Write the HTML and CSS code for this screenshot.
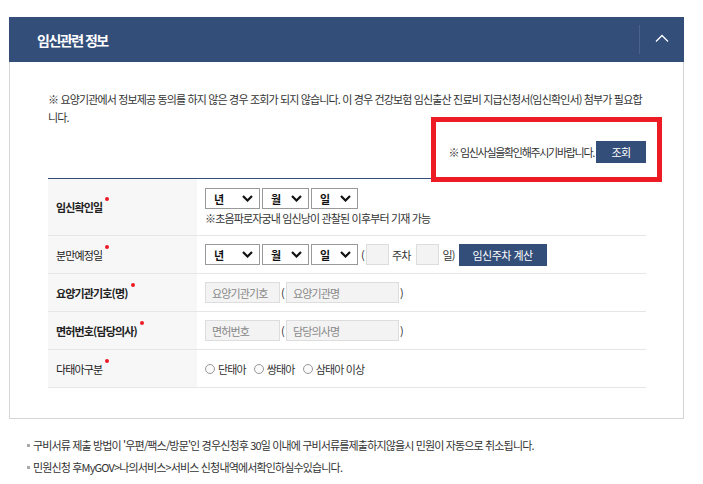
FILE: index.html
```html
<!DOCTYPE html>
<html lang="ko">
<head>
    <meta charset="UTF-8">
    <meta name="viewport" content="width=device-width, initial-scale=1.0">
    <title>임신관련 정보</title>
    <link rel="stylesheet" href="styles.css">
</head>
<body>
    <div class="wrap">
        <div class="panel">
            <div class="panel-head">
                <h2>임신관련 정보</h2>
                <button type="button" class="toggle" aria-label="접기">
                    <svg width="14" height="8" viewBox="0 0 14 8"><polyline points="1,7.5 7,1.5 13,7.5" fill="none" stroke="#fff" stroke-width="1.3"/></svg>
                </button>
            </div>

            <div class="panel-body">
                <p class="notice">※ 요양기관에서 정보제공 동의를 하지 않은 경우 조회가 되지 않습니다. 이 경우 건강보험 임신출산 진료비 지급신청서(임신확인서) 첨부가 필요합니다.</p>

                <div class="check-row">
                    <span class="check-msg">※ 임신사실을확인해주시기바랍니다.</span>
                    <button type="button" class="btn btn-sm">조회</button>
                    <div class="mark"></div>
                </div>

                <table class="form-table">
                    <tr class="tall">
                        <th><span class="req">임신확인일</span></th>
                        <td>
                            <div class="line">
                                <div class="sel sel-y">년<svg width="11" height="7" viewBox="0 0 11 7"><polyline points="1,1 5.5,5.5 10,1" fill="none" stroke="#111" stroke-width="2.2"/></svg></div>
                                <div class="sel">월<svg width="11" height="7" viewBox="0 0 11 7"><polyline points="1,1 5.5,5.5 10,1" fill="none" stroke="#111" stroke-width="2.2"/></svg></div>
                                <div class="sel">일<svg width="11" height="7" viewBox="0 0 11 7"><polyline points="1,1 5.5,5.5 10,1" fill="none" stroke="#111" stroke-width="2.2"/></svg></div>
                            </div>
                            <p class="hint">※초음파로자궁내 임신낭이 관찰된 이후부터 기재 가능</p>
                        </td>
                    </tr>
                    <tr>
                        <th><span class="req light">분만예정일</span></th>
                        <td>
                            <div class="line">
                                <div class="sel sel-y">년<svg width="11" height="7" viewBox="0 0 11 7"><polyline points="1,1 5.5,5.5 10,1" fill="none" stroke="#111" stroke-width="2.2"/></svg></div>
                                <div class="sel">월<svg width="11" height="7" viewBox="0 0 11 7"><polyline points="1,1 5.5,5.5 10,1" fill="none" stroke="#111" stroke-width="2.2"/></svg></div>
                                <div class="sel">일<svg width="11" height="7" viewBox="0 0 11 7"><polyline points="1,1 5.5,5.5 10,1" fill="none" stroke="#111" stroke-width="2.2"/></svg></div>
                                <span class="paren">(</span>
                                <input type="text" class="inp inp-xs">
                                <span class="unit">주차</span>
                                <input type="text" class="inp inp-xs">
                                <span class="unit tight">일)</span>
                                <button type="button" class="btn btn-calc">임신주차 계산</button>
                            </div>
                        </td>
                    </tr>
                    <tr>
                        <th><span class="req">요양기관기호(명)</span></th>
                        <td>
                            <div class="line">
                                <input type="text" class="inp inp-md" placeholder="요양기관기호">
                                <span class="paren">(</span>
                                <input type="text" class="inp inp-lg" placeholder="요양기관명">
                                <span class="paren">)</span>
                            </div>
                        </td>
                    </tr>
                    <tr>
                        <th><span class="req">면허번호(담당의사)</span></th>
                        <td>
                            <div class="line">
                                <input type="text" class="inp inp-md" placeholder="면허번호">
                                <span class="paren">(</span>
                                <input type="text" class="inp inp-lg" placeholder="담당의사명">
                                <span class="paren">)</span>
                            </div>
                        </td>
                    </tr>
                    <tr>
                        <th><span class="req light">다태아구분</span></th>
                        <td>
                            <div class="line radios">
                                <label><span class="radio"></span>단태아</label>
                                <label><span class="radio"></span>쌍태아</label>
                                <label><span class="radio"></span>삼태아 이상</label>
                            </div>
                        </td>
                    </tr>
                </table>
            </div>
        </div>

        <ul class="notes">
            <li>구비서류 제출 방법이 '우편/팩스/방문'인 경우신청후 30일 이내에 구비서류를제출하지않을시 민원이 자동으로 취소됩니다.</li>
            <li>민원신청 후MyGOV&gt;나의서비스&gt;서비스 신청내역에서확인하실수있습니다.</li>
        </ul>
    </div>
</body>
</html>
```

FILE: styles.css
```css
body {
    margin: 0;
    padding: 0;
    background-color: #fff;
    color: #333;
    font-family: "Noto Sans CJK KR", "Noto Sans", sans-serif;
    font-size: 11px;
    letter-spacing: -0.85px;
}

.wrap {
    padding: 17px 19px 0 9px;
}

/* panel header */
.panel-head {
    display: flex;
    align-items: center;
    justify-content: space-between;
    height: 45px;
    background-color: #344e7a;
}

.panel-head h2 {
    margin: 0 0 0 28px;
    font-size: 14px;
    font-weight: bold;
    color: #fff;
    letter-spacing: -1.5px;
}

.toggle {
    display: flex;
    align-items: center;
    justify-content: center;
    width: 45px;
    height: 29px;
    padding: 0 0 3px 0;
    border: none;
    border-left: 1px solid #4a6189;
    background: none;
    cursor: pointer;
}

/* panel body */
.panel-body {
    padding: 28px 37px 30px 38px;
    border: 1px solid #d5d5d5;
    border-top: none;
}

.notice {
    margin: 0;
    line-height: 18px;
    color: #333;
}

.check-row {
    position: relative;
    display: flex;
    align-items: center;
    justify-content: flex-end;
    gap: 2px;
    margin-top: 15px;
    height: 22px;
}

.check-msg {
    letter-spacing: -1.3px;
}

.mark {
    position: absolute;
    top: -24px;
    right: -16px;
    width: 221px;
    height: 55px;
    border: 5px solid #ed1c24;
    z-index: 2;
}

.btn {
    border: none;
    background-color: #344e7a;
    color: #fff;
    font-family: inherit;
    font-size: 11px;
    letter-spacing: -0.5px;
    cursor: pointer;
}

.btn-sm {
    width: 50px;
    height: 22px;
}

.btn-calc {
    width: 88px;
    height: 22px;
    margin-left: 2px;
}

/* form table */
.form-table {
    width: 100%;
    margin-top: 15px;
    border-collapse: collapse;
    border-top: 1px solid #344e7a;
}

.form-table th,
.form-table td {
    height: 37px;
    padding: 0;
    border-bottom: 1px solid #e6e6e6;
    text-align: left;
    vertical-align: middle;
}

.form-table tr.tall th,
.form-table tr.tall td {
    height: 56px;
}

.form-table th {
    width: 141px;
    padding-left: 8px;
    background-color: #f7f7f7;
    font-weight: bold;
    color: #222;
}

.form-table td {
    padding-left: 8px;
}

.req::after {
    content: "";
    display: inline-block;
    width: 4px;
    height: 4px;
    margin-left: 3px;
    border-radius: 50%;
    background-color: #ed1c24;
    vertical-align: top;
    position: relative;
    top: -2px;
}

.req.light {
    font-weight: normal;
}

.line {
    display: flex;
    align-items: center;
}

.sel {
    display: flex;
    align-items: center;
    justify-content: space-between;
    box-sizing: border-box;
    width: 47px;
    height: 21px;
    margin-right: 2px;
    padding: 0 6px 0 8px;
    border: 1px solid #999;
    background-color: #fff;
    font-weight: bold;
    color: #111;
}

.sel-y {
    width: 55px;
}

.hint {
    margin: 1px 0 0 0;
    color: #333;
}

.paren {
    margin: 0 2px 0 1px;
    color: #333;
}

.unit {
    margin: 0 6px 0 3px;
}

.unit.tight {
    margin-right: 2px;
}

.inp {
    box-sizing: border-box;
    height: 21px;
    padding: 0 6px;
    border: 1px solid #ddd;
    background-color: #f3f3f3;
    font-family: inherit;
    font-size: 11px;
    letter-spacing: -0.85px;
    color: #333;
}

.inp::placeholder {
    color: #888;
}

.inp-xs {
    width: 23px;
}

.inp-md {
    width: 75px;
}

.inp-lg {
    width: 113px;
}

.radios label {
    display: flex;
    align-items: center;
    margin-right: 8px;
}

.radio {
    display: inline-block;
    box-sizing: border-box;
    width: 10px;
    height: 10px;
    margin-right: 3px;
    border: 1px solid #999;
    border-radius: 50%;
    background-color: #fafafa;
}

/* bottom notes */
.notes {
    margin: 15px 0 0 0;
    padding: 0 0 0 18px;
    list-style: none;
}

.notes li {
    position: relative;
    padding-left: 6px;
    line-height: 22px;
    color: #333;
}

.notes li::before {
    content: "";
    position: absolute;
    left: 0;
    top: 10px;
    width: 3px;
    height: 3px;
    background-color: #aaa;
}
```
